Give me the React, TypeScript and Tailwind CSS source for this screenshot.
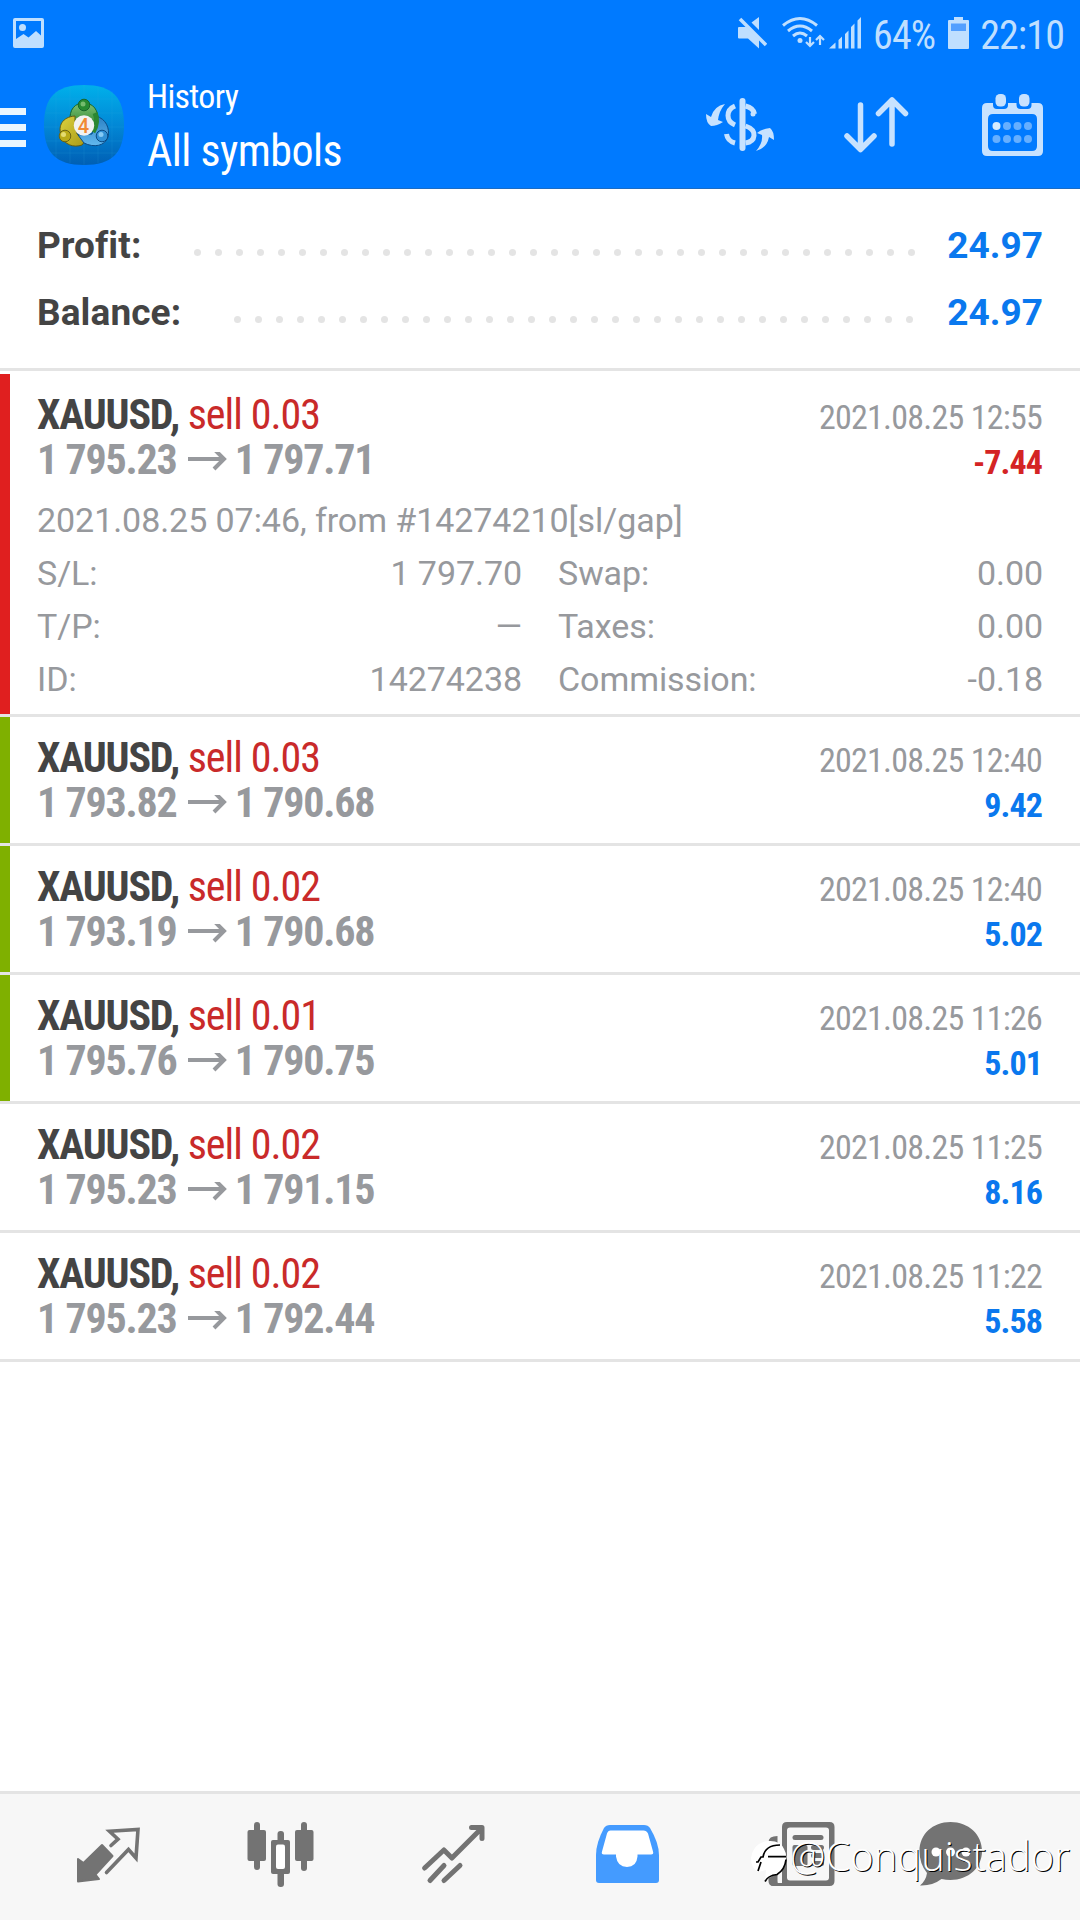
import clsx from "clsx";

type Deal = {
  volume: string;
  open: string;
  close: string;
  time: string;
  profit: string;
  mark?: "red" | "green";
  details?: boolean;
};

const deals: Deal[] = [
  { volume: "0.03", open: "1 795.23", close: "1 797.71", time: "2021.08.25 12:55", profit: "-7.44", mark: "red", details: true },
  { volume: "0.03", open: "1 793.82", close: "1 790.68", time: "2021.08.25 12:40", profit: "9.42", mark: "green" },
  { volume: "0.02", open: "1 793.19", close: "1 790.68", time: "2021.08.25 12:40", profit: "5.02", mark: "green" },
  { volume: "0.01", open: "1 795.76", close: "1 790.75", time: "2021.08.25 11:26", profit: "5.01", mark: "green" },
  { volume: "0.02", open: "1 795.23", close: "1 791.15", time: "2021.08.25 11:25", profit: "8.16" },
  { volume: "0.02", open: "1 795.23", close: "1 792.44", time: "2021.08.25 11:22", profit: "5.58" },
];

const details = [
  ["S/L:", "1 797.70", "Swap:", "0.00"],
  ["T/P:", "—", "Taxes:", "0.00"],
  ["ID:", "14274238", "Commission:", "-0.18"],
];

const condensed = "font-['Roboto_Condensed','Roboto',sans-serif] [font-stretch:75%]";

function StatusBar() {
  return (
    <div className={clsx("flex h-[62px] items-center pl-[13px] pr-[16px] pt-1 text-[40px] leading-none tracking-[-0.9px] text-[#bfdfff]", condensed)}>
      <svg className="mb-[1px] h-[30px] w-[31px]" viewBox="0 0 31 30" fill="currentColor">
        <path fillRule="evenodd" d="M2 0h27a2 2 0 0 1 2 2v26a2 2 0 0 1-2 2H2a2 2 0 0 1-2-2V2a2 2 0 0 1 2-2zM3 3v18l7.500-5 5 3.500L23 13l5 4.500V3z" />
        <circle cx="9.500" cy="9.500" r="3.500" />
      </svg>
      <svg className="mb-[1px] ml-auto h-[32px] w-[30px]" viewBox="738 17 30 32" fill="currentColor">
        <path d="M760 17v13l-7.500-7.500zM740 27h7.500L760 39.500v9l-11-10h-9q-1 0-1-1v-9.500q0-1 1-1z" />
        <path d="M741 19l26 26" stroke="currentColor" strokeWidth="3.500" />
      </svg>
      <svg className="mb-[1px] ml-[14px] h-[33px] w-[44px]" viewBox="782 16 44 33" fill="none" stroke="currentColor" strokeWidth="3">
        <path d="M784 25.500q17-14 34 0M789 31q12-10 24 0M794 36q7-6 14 0" />
        <circle cx="801" cy="40.500" r="2.500" fill="currentColor" stroke="none" />
        <path d="M811 37v9m-4-4l4 4 4-4M821 45v-9m-4 4l4-4 4 4" strokeWidth="2.200" />
      </svg>
      <svg className="ml-[4px] h-[32px] w-[32px]" viewBox="830 17 32 32" fill="currentColor">
        <path d="M830 48.500l6.500-6v6zM839.500 40l3.500-3.500v12h-3.500zM846 34l3.500-3.500v18H846zM852 27l3.500-3.500v25H852zM858.500 20.500l3.500-3.500v31.500h-3.500z" />
      </svg>
      <span className="ml-[12px] pt-[5px]">64%</span>
      <svg className="ml-[13px] mr-[11px] h-[32px] w-[21px]" viewBox="0 0 21 32" fill="currentColor">
        <path d="M6 0h9v3h5q1 0 1 1v27q0 1-1 1H1q-1 0-1-1V4q0-1 1-1h5z" />
        <path d="M3 6.500h15v7.500H3z" fill="#529fff" />
      </svg>
      <span className="pt-[5px]">22:10</span>
    </div>
  );
}

function AppIcon() {
  return (
    <svg className="ml-[18px] h-[80px] w-[80px]" viewBox="0 0 80 80">
      <defs>
        <linearGradient id="tile" x1="0" y1="0" x2="0" y2="1">
          <stop offset="0" stopColor="#00b0ea" />
          <stop offset=".5" stopColor="#0288d6" />
          <stop offset="1" stopColor="#005fb4" />
        </linearGradient>
        <linearGradient id="green" x1="0" y1="0" x2="0" y2="1">
          <stop offset="0" stopColor="#7fc074" />
          <stop offset="1" stopColor="#2b8731" />
        </linearGradient>
        <linearGradient id="yellow" x1="0" y1="0" x2="1" y2="1">
          <stop offset="0" stopColor="#ddd23f" />
          <stop offset="1" stopColor="#a89a16" />
        </linearGradient>
        <linearGradient id="blue" x1="0" y1="0" x2="0" y2="1">
          <stop offset="0" stopColor="#2a80c4" />
          <stop offset="1" stopColor="#62b8ee" />
        </linearGradient>
      </defs>
      <path d="M40 0C68 0 80 12 80 40S68 80 40 80 0 68 0 40 12 0 40 0z" fill="url(#tile)" />
      <path d="M12 6v68M26 2v76M40 0v80M54 2v76M68 6v68M6 14h68M2 28h76M0 42h80M2 56h76M6 68h68" stroke="#3fb3e6" strokeOpacity=".15" />
      <path d="M26 37c-1-13 5-19 14-19s15 7 14 19l-4 5-10-8-9 7z" fill="url(#green)" stroke="#17672c" />
      <path d="M31 31c-13 1-17 10-14 19 3 10 13 13 21 10l3-4-8-7-2-10z" fill="url(#yellow)" stroke="#625c12" />
      <path d="M52 31c10 3 14 12 12 21-3 9-14 11-24 6l-6-8 14-1z" fill="url(#blue)" stroke="#0a4b86" />
      <path d="M51 28q4 9-2 19" fill="none" stroke="#2b8731" strokeWidth="5" />
      <circle cx="40" cy="20" r="5.800" fill="#278b31" stroke="#17672c" />
      <circle cx="21" cy="51" r="5.800" fill="#b9aa18" stroke="#6c6414" />
      <circle cx="58" cy="51" r="5.800" fill="#3191d6" stroke="#0a4b86" />
      <circle cx="39" cy="19" r="2.500" fill="#74bb6c" />
      <circle cx="19.500" cy="49.500" r="2.500" fill="#e5dc70" />
      <circle cx="57" cy="49.500" r="2.500" fill="#85caf5" />
      <circle cx="40" cy="40.500" r="10.200" fill="#f2f2f2" />
      <text x="39.500" y="47.500" textAnchor="middle" fontSize="20" fontWeight="500" fontFamily="Roboto, sans-serif" fill="#f08a34">4</text>
    </svg>
  );
}

function Toolbar() {
  return (
    <div className="flex h-[126px] items-center pr-[37px]">
      <div className="mt-[5px] flex w-[26px] flex-col gap-[9px]">
        <i className="h-[7px] bg-[#e9f6ff]" />
        <i className="h-[7px] bg-[#e9f6ff]" />
        <i className="h-[7px] bg-[#e9f6ff]" />
      </div>
      <AppIcon />
      <div className={clsx("ml-[23px] text-white", condensed)}>
        <p className="text-[34px] leading-[52px] tracking-[-0.7px]">History</p>
        <p className="text-[44px] leading-[58px] tracking-[-0.55px]">All symbols</p>
      </div>
      <svg className="ml-auto h-[56px] w-[70px]" viewBox="705 97 70 56" fill="#c7e2ff">
        <path d="M725 104q-11 2-14 13l-5-3q0 9 5 12 6 0 12-4l-5-2q1-9 7-16zM756 151q11-3 13-14l5 3q0-9-4-12-8 1-13 5l5 2q1 8-6 16z" />
        <rect x="739.500" y="98" width="6" height="53" rx="3" />
        <path d="M735 106q-7 3-7 9.500t7 9.500M726.500 134q1 7 8.500 9M745.500 106q8 2 9 8M745.500 126q9 3 8.500 9.500T745.500 143" fill="none" stroke="#c7e2ff" strokeWidth="5" />
        <path d="M753 114v0" stroke="#c7e2ff" strokeWidth="5" strokeLinecap="round" />
      </svg>
      <svg className="ml-[68px] h-[58px] w-[66px]" viewBox="843 97 66 58" fill="none" stroke="#c7e2ff" strokeWidth="5.500" strokeLinecap="round" strokeLinejoin="round">
        <path d="M860.500 106v44M847 137l13.500 13.500L874 137M892 145v-44M878.500 114.500L892 101l13.500 13.500" />
      </svg>
      <svg className="ml-[73px] h-[64px] w-[61px]" viewBox="0 0 61 64" fill="#c7e2ff">
        <path fillRule="evenodd" d="M5 10h51q5 0 5 5v43q0 5-5 5H5q-5 0-5-5V15q0-5 5-5zM11 21q-5 0-5 5v27q0 5 5 5h39q5 0 5-5V26q0-5-5-5z" />
        <path d="M11 8h15v4q0 4-4 4h-7q-4 0-4-4zM34.500 8h15v4q0 4-4 4h-7q-4 0-4-4z" fill="#007aff" />
        <rect x="13.500" y="1" width="10.500" height="12.500" rx="4.500" />
        <rect x="37" y="1" width="10.500" height="12.500" rx="4.500" />
        <circle cx="14.500" cy="33" r="4" fill="#d6ecff" />
        <g fill="#66afff">
          <circle cx="25" cy="33" r="4" />
          <circle cx="35.500" cy="33" r="4" />
          <circle cx="46" cy="33" r="4" />
          <circle cx="14.500" cy="46" r="4" />
          <circle cx="25" cy="46" r="4" />
          <circle cx="35.500" cy="46" r="4" />
          <circle cx="46" cy="46" r="4" />
        </g>
      </svg>
    </div>
  );
}

function SummaryRow({ label, value, dots, last }: { label: string; value: string; dots: number; last?: boolean }) {
  return (
    <div className="flex h-[67px] items-center px-[37px] text-[37px] font-bold">
      <span className="tracking-[0.1px] text-[#444]">{label}</span>
      <div className={clsx("ml-auto flex gap-[14px] pt-[14px]", last ? "mr-[34px]" : "mr-[32px]")}>
        {Array.from({ length: dots }, (_, i) => (
          <i key={i} className="size-[7px] rounded-full bg-[#e4e4e4]" />
        ))}
      </div>
      <span className="text-[#0a78ee]">{value}</span>
    </div>
  );
}

function DealRow({ deal }: { deal: Deal }) {
  return (
    <div
      className={clsx(
        "border-b-3 border-[#e4e4e4]",
        deal.details ? "h-[343px]" : "h-[129px]"
      )}
    >
      <div
        className={clsx(
          "h-full border-l-10 pt-[18px] pl-[27px] pr-[37px]",
          deal.mark === "red" && "border-[#e01f1f]",
          deal.mark === "green" && "border-[#7fb000]",
          !deal.mark && "border-transparent"
        )}
      >
        <div className={clsx("text-[42px] leading-[45px] tracking-[-0.95px]", condensed)}>
          <div className="flex h-[45px] items-baseline justify-between">
            <p className="text-[#c92a2a]">
              <b className="tracking-[-1.2px] text-[#444]">XAUUSD,</b> sell {deal.volume}
            </p>
            <span className="mr-[1px] text-[34px] tracking-[-0.75px] text-[#97999d]">{deal.time}</span>
          </div>
          <div className="flex h-[45px] items-baseline justify-between font-bold text-[#97999d]">
            <p className="flex items-baseline tracking-[-1.2px]">
              {deal.open}
              <svg className="mr-[8px] ml-[11px] h-[22px] w-[39px]" viewBox="0 0 39 22" fill="none" stroke="currentColor" strokeWidth="4">
                <path d="M0 7h37M26 -3l10 10-10 10" />
              </svg>
              {deal.close}
            </p>
            <span className={clsx("mr-[1px] text-[34px]", deal.profit.startsWith("-") ? "text-[#d42424]" : "text-[#0a78ee]")}>
              {deal.profit}
            </span>
          </div>
        </div>
        {deal.details && (
          <div className="mt-[12px] text-[34px] leading-[53px] tracking-[-0.06px] text-[#97999d]">
            <p>2021.08.25 07:46, from #14274210[sl/gap]</p>
            {details.map(([a, b, c, d]) => (
              <div key={a} className="flex h-[53px]">
                <span>{a}</span>
                <span className="ml-auto">{b}</span>
                <p className="ml-[36px] flex w-[485px] justify-between">
                  <span>{c}</span>
                  <span>{d}</span>
                </p>
              </div>
            ))}
          </div>
        )}
      </div>
    </div>
  );
}

function BottomNav() {
  return (
    <nav className="relative flex h-[129px] items-start border-t-3 border-[#e4e4e4] bg-[#f7f7f7] pt-[24px] text-[#737373]">
      <svg className="ml-[72px] h-[72px] w-[72px]" viewBox="72 1818 72 72" fill="none">
        <path d="M111 1845.500l7-6.300-8.500-8L138 1829.500l-2 28.500-7.500-8.500-22 23" stroke="currentColor" strokeWidth="3.600" strokeLinecap="round" />
        <path d="M78 1859l5.500 4 18.500-18 10.500 11-17 18.500 3.500 4.500-21 2.500z" fill="currentColor" stroke="currentColor" strokeWidth="2" strokeLinejoin="round" />
      </svg>
      <svg className="ml-[100px] h-[72px] w-[72px]" viewBox="244 1818 72 72" fill="currentColor">
        <rect x="247.500" y="1830" width="18.500" height="31" rx="2" />
        <rect x="254" y="1822" width="6" height="48" rx="3" />
        <rect x="295" y="1830" width="18.500" height="31" rx="2" />
        <rect x="301" y="1822" width="6" height="49" rx="3" />
        <rect x="277.500" y="1831" width="6.500" height="56" rx="3" />
        <rect x="271" y="1840" width="19" height="34" rx="2" />
        <rect x="276" y="1844.500" width="9" height="24.500" rx="2" fill="#fff" />
      </svg>
      <svg className="ml-[100px] h-[72px] w-[72px]" viewBox="416 1818 72 72" fill="none" stroke="currentColor" strokeWidth="5" strokeLinecap="round" strokeLinejoin="round">
        <path d="M424.600 1868l19.300-18 8 8 28-28M471.500 1827.500H482v11M430 1880.500l14-15M444 1880.500l16-15" />
      </svg>
      <svg className="ml-[100px] h-[72px] w-[76px]" viewBox="588 1818 76 72" fill="#449bff">
        <path d="M610 1825h34q4 0 6 3 9 15 9 27v25q0 3-3 3h-57q-3 0-3-3v-25q0-12 8-27 2-3 6-3z" />
        <path d="M610.500 1830.500h33q3 0 4.500 3l5 18q1 3-2 3h-13.500v2q-1 10.500-10.500 10.500t-11-10.500v-2H604q-3 0-2-3l5-18q1-3 3.500-3z" fill="#fff" />
      </svg>
      <svg className="ml-[100px] h-[72px] w-[76px]" viewBox="764 1818 76 72" fill="currentColor">
        <path d="M777.500 1836v45q0 5 5 5h-9q-5 0-5-5v-39q0-6 9-6z" />
        <path fillRule="evenodd" d="M787 1822h42.500q5 0 5 5v54q0 5-5 5H774q-4 0-4-3h12v-56q0-5 5-5zM790 1827.500q-3 0-3 3v47q0 3 3 3h36q3 0 3-3v-47q0-3-3-3z" />
        <rect x="792.500" y="1835" width="31" height="5" rx="2.500" />
        <rect x="792.500" y="1845" width="15" height="21" rx="2" />
        <rect x="811" y="1845" width="13" height="5" rx="2.500" />
        <rect x="811" y="1853" width="13" height="5" rx="2.500" />
        <rect x="811" y="1861" width="13" height="5" rx="2.500" />
      </svg>
      <svg className="ml-[74px] h-[72px] w-[76px]" viewBox="914 1818 76 72" fill="currentColor">
        <path d="M950.500 1822c18 0 31.500 12.500 31.500 29s-13.500 29-31.500 29q-4.500 0-9-1-9 7-21.500 6.500 6-5 7-12.500-7.500-9-7.500-22c0-16.500 13-29 31-29z" />
        <g fill="#fff">
          <circle cx="936" cy="1852" r="4.500" />
          <circle cx="950.500" cy="1852" r="4.500" />
          <circle cx="966" cy="1852" r="4.500" />
        </g>
      </svg>

      {/* author tag laid over the bar */}
      <div className="absolute top-[36px] left-[751px] flex items-start text-white">
        <svg className="mt-[11px] h-[44px] w-[36px] overflow-visible" viewBox="0 0 36 44">
          <path d="M17 0q12-1 16 8 4 7 1 14-2 10-10 12-6 2-10 7l1-12-8 2Q0 27 0 17 2 2 17 0z" fill="#fff" />
          <path d="M5 21h2l3-5h2q2-12 17-12M17 15.700h18M7 30l3-9M14 40.500q3-6 12-7 8-5 9-15" fill="none" stroke="#000" strokeWidth="1.700" />
        </svg>
        <span className="ml-[3px] font-['Open_Sans',sans-serif] text-[40px] leading-[52px] font-light [text-shadow:1px_1px_0_#000]">@Conquistador</span>
      </div>
    </nav>
  );
}

export default function App() {
  return (
    <div className="flex h-[1920px] w-[1080px] flex-col overflow-hidden bg-white font-['Roboto',sans-serif]">
      <header className="h-[189px] border-b border-[#1b6cc4] bg-[#007aff]">
        <StatusBar />
        <Toolbar />
      </header>
      <section className="h-[182px] border-b-3 border-[#e4e4e4] pt-[23px]">
        <SummaryRow label="Profit:" value="24.97" dots={35} />
        <SummaryRow label="Balance:" value="24.97" dots={33} last />
      </section>
      <main className="flex-1 pt-[3px]">
        {deals.map((deal, i) => (
          <DealRow key={i} deal={deal} />
        ))}
      </main>
      <BottomNav />
    </div>
  );
}
